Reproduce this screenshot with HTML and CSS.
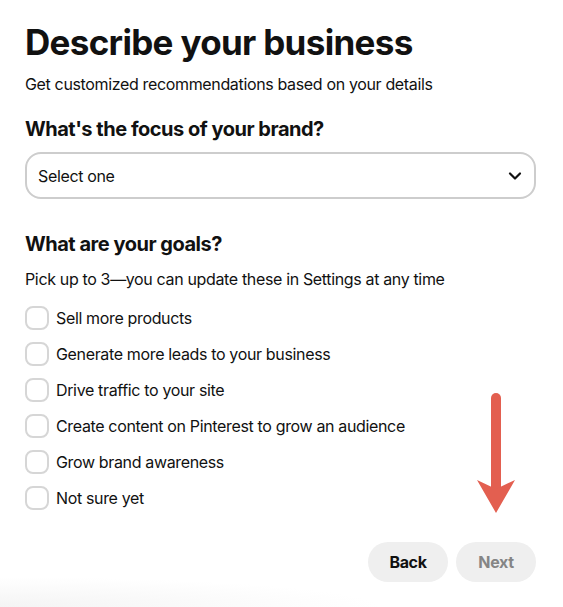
FILE: index.html
```html
<!DOCTYPE html>
<html lang="en">
<head>
<meta charset="utf-8">
<title>Describe your business</title>
<link rel="stylesheet" href="styles.css">
</head>
<body>
<main class="page">
  <h1 class="title">Describe your business</h1>
  <p class="subtitle">Get customized recommendations based on your details</p>

  <h2 class="section-title focus-title">What's the focus of your brand?</h2>
  <div class="select">
    <span class="select-text">Select one</span>
    <svg class="chevron" width="14" height="14" viewBox="0 0 14 14" aria-hidden="true">
      <path d="M2 4.5 L7 9.5 L12 4.5" fill="none" stroke="#111" stroke-width="2.2" stroke-linecap="round" stroke-linejoin="round"/>
    </svg>
  </div>

  <h2 class="section-title goals-title">What are your goals?</h2>
  <p class="hint">Pick up to 3—you can update these in Settings at any time</p>

  <ul class="options">
    <li class="option"><span class="box"></span><span>Sell more products</span></li>
    <li class="option"><span class="box"></span><span>Generate more leads to your business</span></li>
    <li class="option"><span class="box"></span><span>Drive traffic to your site</span></li>
    <li class="option"><span class="box"></span><span>Create content on Pinterest to grow an audience</span></li>
    <li class="option"><span class="box"></span><span>Grow brand awareness</span></li>
    <li class="option"><span class="box"></span><span>Not sure yet</span></li>
  </ul>

  <div class="actions">
    <button class="btn btn-back">Back</button>
    <button class="btn btn-next">Next</button>
    <svg class="arrow" width="44" height="128" viewBox="0 0 44 128" aria-hidden="true">
      <line x1="22" y1="6" x2="22" y2="100" stroke="#e35f50" stroke-width="10" stroke-linecap="round"/>
      <path d="M3 88 L22 97 L41 88 L22 121 Z" fill="#e35f50"/>
    </svg>
  </div>
</main>
<div class="fade"></div>
</body>
</html>
```

FILE: styles.css
```css
html, body {
  margin: 0;
  padding: 0;
  background: #fff;
}

body {
  font-family: Inter, "Noto Sans", "Liberation Sans", sans-serif;
  color: #111;
  width: 563px;
  height: 607px;
  overflow: hidden;
  position: relative;
  letter-spacing: -0.35px;
}

.page {
  padding: 21px 27px 0 25px;
}

.title {
  margin: 0;
  font-size: 35px;
  line-height: 42px;
  font-weight: 700;
  letter-spacing: -0.68px;
}

.subtitle {
  margin: 9px 0 0;
  font-size: 16px;
  line-height: 24px;
  color: #111;
}

.section-title {
  margin: 0;
  font-size: 20px;
  line-height: 28px;
  font-weight: 700;
  letter-spacing: -0.48px;
}

.focus-title {
  margin-top: 19px;
}

.select {
  margin-top: 9px;
  height: 47px;
  box-sizing: border-box;
  border: 2px solid #cdcdcd;
  border-radius: 16px;
  display: flex;
  align-items: center;
  justify-content: space-between;
  padding: 0 12px 0 11px;
  font-size: 16px;
}

.chevron {
  display: block;
}

.goals-title {
  margin-top: 31px;
}

.hint {
  margin: 9px 0 0;
  font-size: 16px;
  line-height: 24px;
}

.options {
  list-style: none;
  margin: 15px 0 0;
  padding: 0;
  display: flex;
  flex-direction: column;
  gap: 12px;
}

.option {
  display: flex;
  align-items: center;
  gap: 7px;
  height: 24px;
  font-size: 16px;
}

.box {
  width: 24px;
  height: 24px;
  box-sizing: border-box;
  border: 2px solid #d6d6d6;
  border-radius: 8px;
  flex: none;
}

.actions {
  position: relative;
  display: flex;
  justify-content: flex-end;
  gap: 8px;
  margin-top: 32px;
}

.btn {
  font-family: inherit;
  font-size: 16px;
  font-weight: 700;
  letter-spacing: -0.35px;
  width: 80px;
  height: 40px;
  border: 0;
  border-radius: 20px;
  background: #efefef;
  padding: 0;
}

.btn-back {
  color: #111;
}

.btn-next {
  color: #858585;
}

.arrow {
  position: absolute;
  right: 18px;
  bottom: 62px;
}

.fade {
  position: absolute;
  left: 0;
  bottom: 0;
  width: 563px;
  height: 30px;
  background: radial-gradient(ellipse 380px 30px at 0 100%, #f4f4f4 0%, rgba(255,255,255,0) 100%);
  pointer-events: none;
}
```
